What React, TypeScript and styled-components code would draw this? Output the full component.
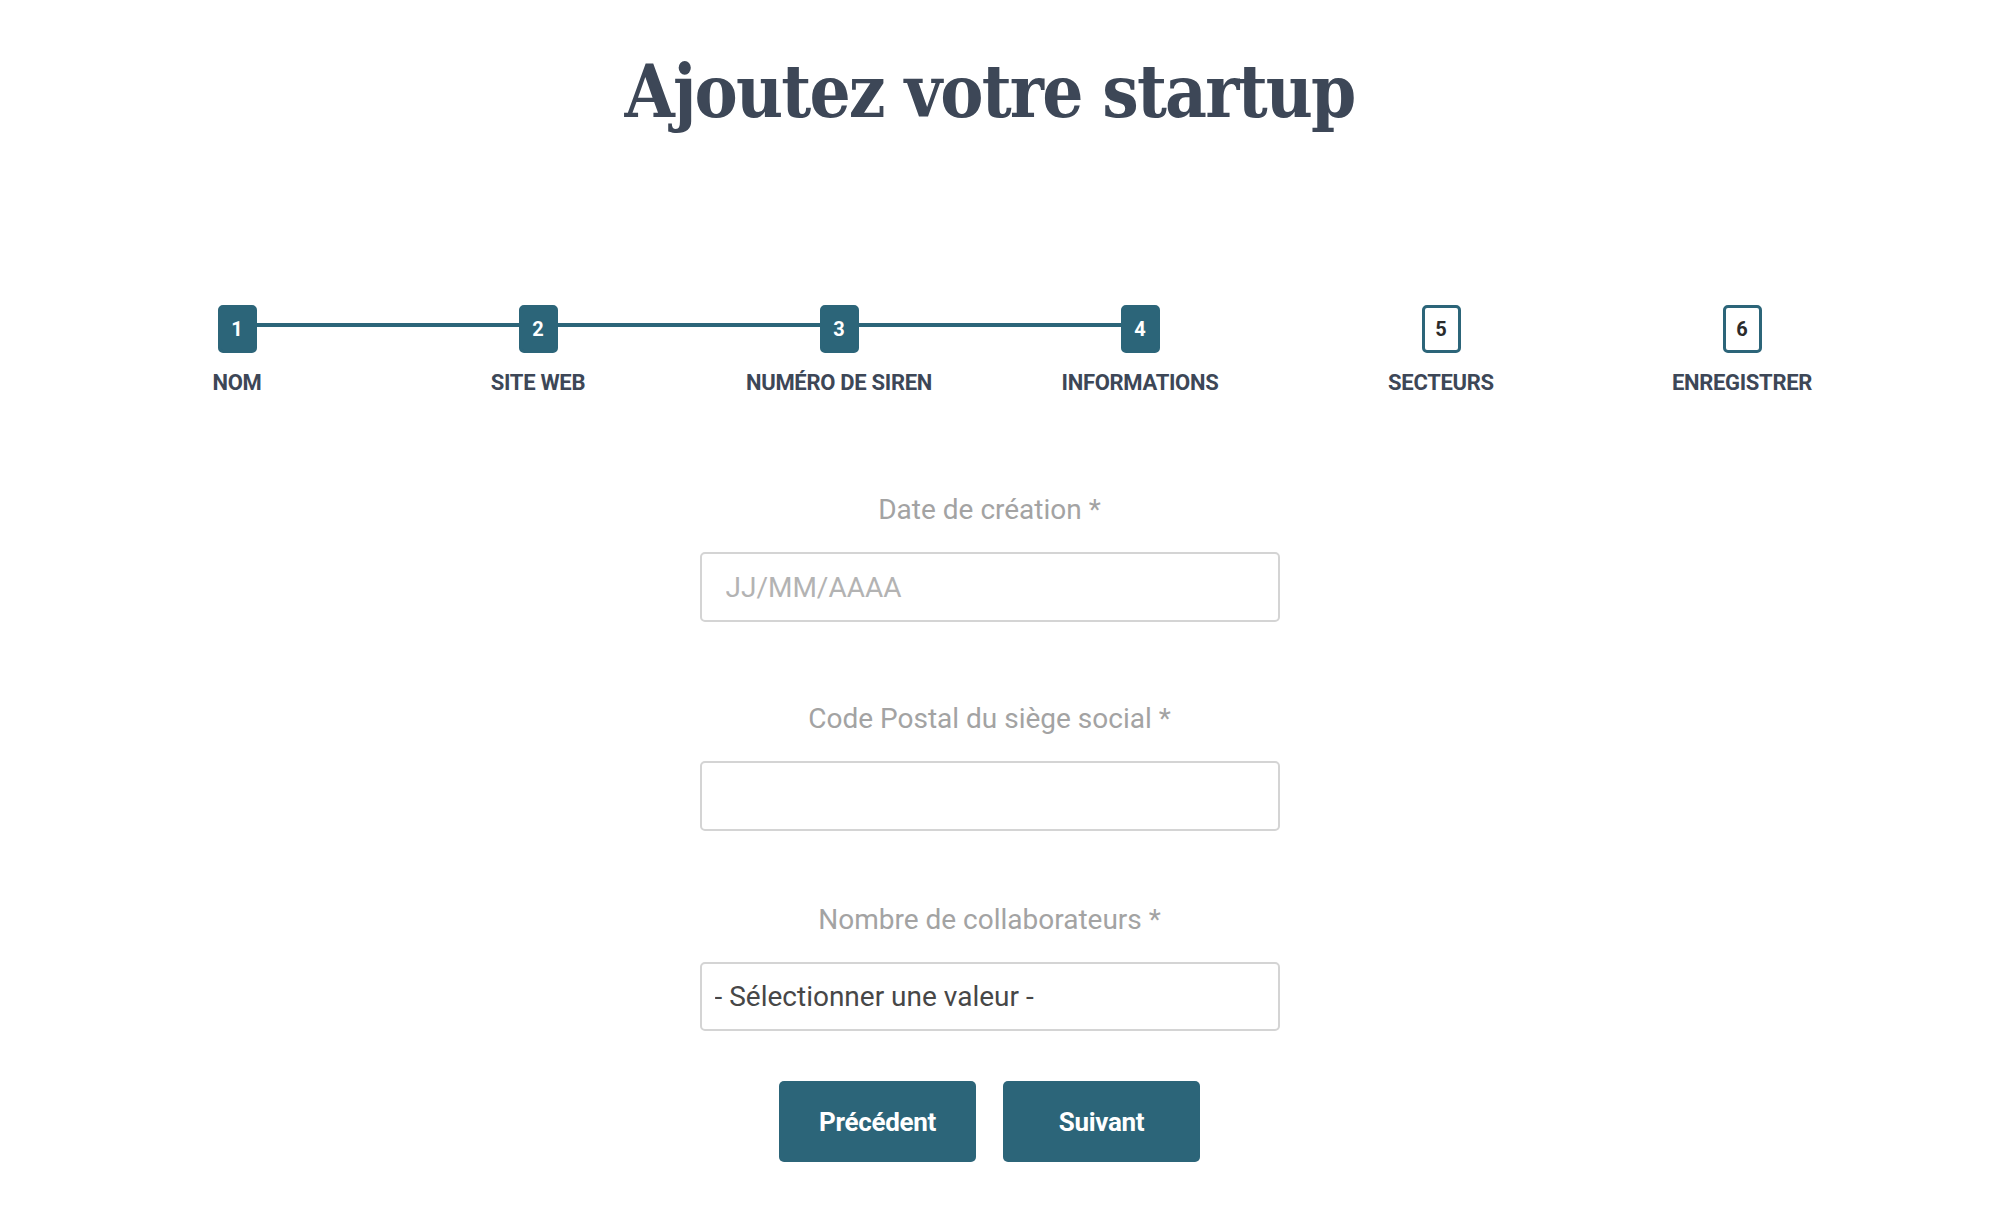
import styled, { createGlobalStyle } from "styled-components";

const Teal = "#2c6579";
const Slate = "#3d4757";

const GlobalStyle = createGlobalStyle`
  body {
    margin: 0;
    background: #ffffff;
    font-family: Roboto, "Liberation Sans", sans-serif;
  }
`;

const Page = styled.div`
  display: flex;
  flex-direction: column;
  align-items: center;
  padding-right: 20px;
  padding-bottom: 44px;
`;

const Title = styled.h1`
  margin: 54px 0 0;
  font-family: "DejaVu Serif Condensed", "DejaVu Serif", "Liberation Serif", serif;
  font-stretch: condensed;
  font-weight: 700;
  font-size: 72px;
  line-height: 76px;
  letter-spacing: -1.8px;
  color: ${Slate};
`;

const Stepper = styled.div`
  display: grid;
  grid-template-columns: repeat(6, 301px);
  margin-top: 175px;
`;

const Step = styled.div`
  display: flex;
  flex-direction: column;
  align-items: center;
`;

const Track = styled.div`
  display: flex;
  align-items: flex-start;
  width: 100%;
`;

const Connector = styled.div<{ $on?: boolean }>`
  flex: 1;
  height: 4px;
  margin-top: 18px;
  background: ${(p) => (p.$on ? Teal : "transparent")};
`;

const StepBox = styled.div<{ $done?: boolean }>`
  box-sizing: border-box;
  width: 39px;
  height: 48px;
  border: 3px solid ${Teal};
  border-radius: 5px;
  background: ${(p) => (p.$done ? Teal : "#ffffff")};
  color: ${(p) => (p.$done ? "#ffffff" : "#2b2b2b")};
  display: flex;
  align-items: center;
  justify-content: center;
  font-weight: 700;
  font-size: 20px;
`;

const StepLabel = styled.div`
  margin-top: 18px;
  font-weight: 700;
  font-size: 22px;
  line-height: 24px;
  text-transform: uppercase;
  color: ${Slate};
  letter-spacing: -0.3px;
`;

const Form = styled.form`
  width: 580px;
  display: flex;
  flex-direction: column;
  margin-top: 100px;
`;

const Field = styled.div<{ $top: number }>`
  display: flex;
  flex-direction: column;
  align-items: center;
  gap: 27px;
  margin-top: ${(p) => p.$top}px;
`;

const Label = styled.label`
  font-size: 28px;
  line-height: 30px;
  color: #a3a3a3;
`;

const TextInput = styled.input`
  box-sizing: border-box;
  width: 100%;
  height: 70px;
  padding: 0 24px;
  border: 2px solid #d4d4d4;
  border-radius: 5px;
  font-family: Roboto, sans-serif;
  font-size: 28px;
  color: #444444;
  outline: none;

  &::placeholder {
    color: #b3b3b3;
  }
`;

const Select = styled.select`
  box-sizing: border-box;
  width: 100%;
  height: 69px;
  padding: 0 13px;
  border: 2px solid #d4d4d4;
  border-radius: 5px;
  background: #ffffff;
  appearance: none;
  font-family: Roboto, sans-serif;
  font-size: 28px;
  color: #474747;
  outline: none;
`;

const Actions = styled.div`
  display: flex;
  justify-content: center;
  gap: 27px;
  margin-top: 50px;
`;

const Button = styled.button`
  width: 197px;
  height: 81px;
  border: none;
  border-radius: 5px;
  background: ${Teal};
  color: #ffffff;
  font-family: Roboto, sans-serif;
  font-weight: 700;
  font-size: 26px;
  letter-spacing: -0.3px;
  cursor: pointer;
`;

const steps = ["Nom", "Site web", "Numéro de SIREN", "Informations", "Secteurs", "Enregistrer"];
const current = 4;

export default function App() {
  return (
    <Page>
      <GlobalStyle />
      <Title>Ajoutez votre startup</Title>

      <Stepper>
        {steps.map((label, i) => {
          const n = i + 1;
          return (
            <Step key={label}>
              <Track>
                <Connector $on={n > 1 && n <= current} />
                <StepBox $done={n <= current}>{n}</StepBox>
                <Connector $on={n < current} />
              </Track>
              <StepLabel>{label}</StepLabel>
            </Step>
          );
        })}
      </Stepper>

      <Form onSubmit={(e) => e.preventDefault()}>
        <Field $top={0}>
          <Label>Date de création *</Label>
          <TextInput placeholder="JJ/MM/AAAA" />
        </Field>
        <Field $top={82}>
          <Label>Code Postal du siège social *</Label>
          <TextInput />
        </Field>
        <Field $top={74}>
          <Label>Nombre de collaborateurs *</Label>
          <Select defaultValue="">
            <option value="">- Sélectionner une valeur -</option>
            <option value="1">1 à 10</option>
            <option value="2">11 à 50</option>
            <option value="3">51 à 200</option>
            <option value="4">Plus de 200</option>
          </Select>
        </Field>
        <Actions>
          <Button type="button">Précédent</Button>
          <Button type="submit">Suivant</Button>
        </Actions>
      </Form>
    </Page>
  );
}
